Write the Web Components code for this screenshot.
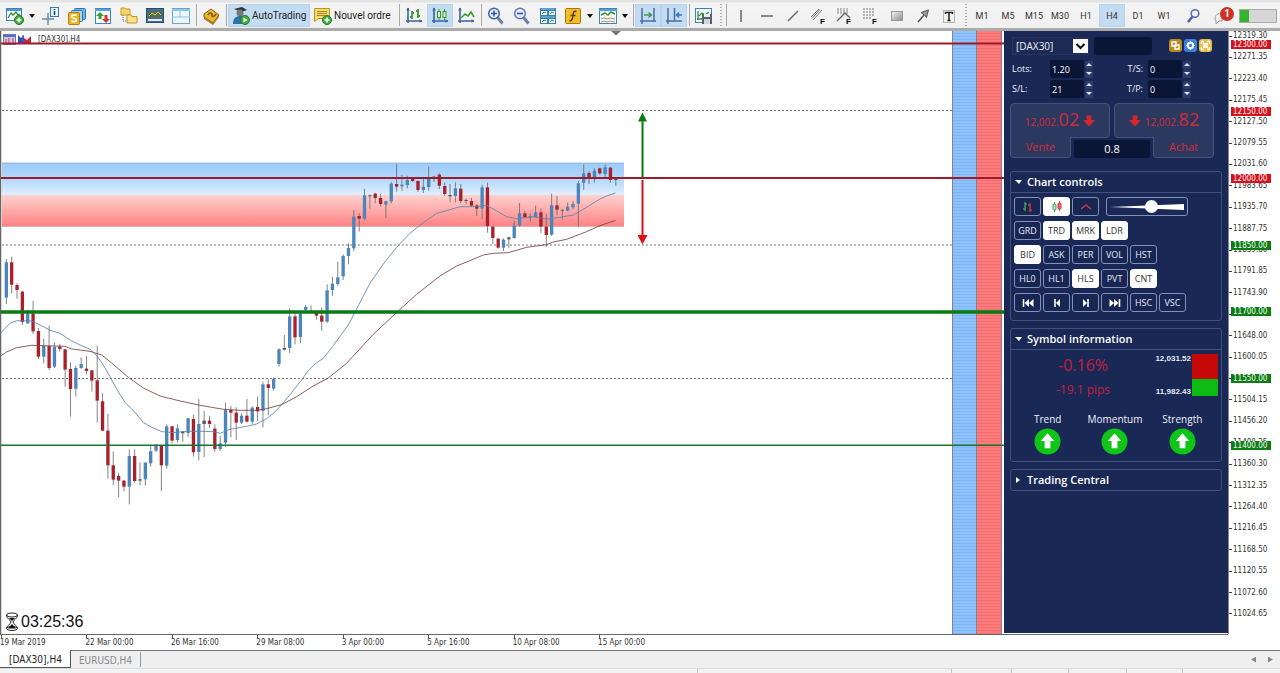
<!DOCTYPE html>
<html lang="fr">
<head>
<meta charset="utf-8">
<title>[DAX30],H4</title>
<style>
html, body { margin: 0; height: 100%; }
body { background: #f1f1f1; font-family: "DejaVu Sans Condensed", "DejaVu Sans", sans-serif; color: #222; }
</style>
</head>
<body>
<trade-app></trade-app>
<script>
const sheet = (el, html) => {
  const t = document.createElement('template');
  t.innerHTML = html;
  el.attachShadow({ mode: 'open' }).append(t.content.cloneNode(true));
  return el.shadowRoot;
};

/* ---------- toolbar icons, all on an 18 x 18 grid ---------- */
const axes = '<path d="M3 1v15M1 14h16" stroke="#3f62a0" stroke-width="1.6" fill="none"/><path d="M1.200 3.500L3 .5l1.800 3zM14.500 12.200l3 1.800-3 1.800z" fill="#3f62a0"/>';
const plus = '<circle cx="13" cy="13" r="4.500" fill="#3fae3a" stroke="#24782a"/><path d="M13 10.500v5M10.500 13h5" stroke="#fff" stroke-width="1.600"/>';
const fib = '<text x="10" y="17" font-family="Liberation Sans" font-weight="700" font-size="8" fill="#000">F</text>';
const ICONS = {
  newchart: '<rect x=".5" y="1.500" width="15" height="12" fill="#f3fbff" stroke="#3c84b8"/><path d="M1 3h14" stroke="#4f9bd0" stroke-width="2"/><path d="M2 11l3-5 2 2 3-3 2 3 2-1" stroke="#3b8a35" stroke-width="1.300" fill="none"/>' + plus,
  cross: '<path d="M6 6v12M0 12h12" stroke="#5f8bb0" stroke-width="1.400"/><rect x="8.500" y=".5" width="8" height="9" fill="#e8f4ff" stroke="#3a77ad"/><path d="M12.500 4v4M12.500 2v1" stroke="#174f86" stroke-width="1.600"/>',
  money: '<rect x="6.500" y="1.500" width="11" height="11" rx="1" fill="#6bb4ea" stroke="#2f76b3"/><rect x="3.500" y="3.500" width="11" height="11" rx="1" fill="#a9d5f5" stroke="#2f76b3"/><rect x=".5" y="5.500" width="11" height="12" rx="1" fill="#ecb520" stroke="#b57d0c"/><path d="M8.500 8.500c-1-1-5-1-5 1s5 1.500 5 3.500-4 2-5 .7" stroke="#fff" stroke-width="1.700" fill="none"/>',
  updown: '<rect x="1.500" y="1.500" width="15" height="15" fill="#f2faff" stroke="#3e86bd"/><path d="M1 3h16" stroke="#57a3d8" stroke-width="2"/><path d="M6 5l4 4H7.500v3h-3V9H2z" fill="#35a030"/><path d="M12 16l-4-4h2.500V8h3v4H16z" fill="#d8322a"/>',
  folders: '<path d="M1 1h4l1 1h4v6H1z" fill="#f7d56e" stroke="#c89a2c"/><path d="M3 8v6h4" stroke="#666" fill="none" stroke-dasharray="1 1"/><path d="M7 8h4l1 1.500h5V16H7z" fill="#fae08a" stroke="#c4922a"/>',
  terminal: '<rect x=".5" y="1.500" width="17" height="14" fill="#3f6f9c" stroke="#264c70"/><rect x="2" y="4" width="14" height="7" fill="#5d6a52"/><path d="M3 9l3-3 3 2 3-3 3 3" stroke="#c9d84a" fill="none"/><path d="M2 13h14" stroke="#dceeff" stroke-width="2"/>',
  layout: '<rect x=".5" y="1.500" width="17" height="15" fill="#eaf7ff" stroke="#6ca6cf"/><path d="M0 3h18" stroke="#8fc5ea" stroke-width="2"/><path d="M8 4v6M0 10h18" stroke="#8fc0df"/>',
  book: '<path d="M2 7l7-5 8 6-6 8-9-6z" fill="#e8b82c" stroke="#8a5d10"/><path d="M2 10l9 6 6-8v2l-6 8-9-6z" fill="#a8762a"/><path d="M6 8c1-3 5-2 4 0s3 2 4-1" stroke="#7d4f10" stroke-width="1.500" fill="none"/>',
  auto: '<path d="M2 2l8-2 5 3-6 2z" fill="#333"/><circle cx="8" cy="6" r="3.500" fill="#707a80"/><path d="M1 17c0-6 3-8 7-8s6 2 6 8z" fill="#2f6fae"/><circle cx="13" cy="13" r="4.500" fill="#3fae3a" stroke="#24782a"/><path d="M11.500 10.500l4 2.500-4 2.500z" fill="#fff"/>',
  order: '<path d="M.5 1.500h15v10h-11l-4 3z" fill="#f8dc66" stroke="#b9922a"/><path d="M3 4.500h10M3 6.500h10M3 8.500h8" stroke="#a8852a"/>' + plus,
  bars: axes + '<path d="M7 4v8M5 10h2M7 6h2M13 2v9M11 4h2M13 9h2" stroke="#3f9a32" stroke-width="1.800"/>',
  candles: axes + '<path d="M8 2v11M13.500 2v11" stroke="#3f9a32"/><rect x="6.500" y="4.500" width="3" height="6" fill="#d9f2d4" stroke="#3f9a32"/><rect x="12" y="4.500" width="3" height="6" fill="#d9f2d4" stroke="#3f9a32"/>',
  line: axes + '<path d="M4 11l4-4 3 2 3-4 3 5" stroke="#3f9a32" stroke-width="1.600" fill="none"/>',
  zoomin: '<path d="M10.500 10.500l5 6" stroke="#6d7fa8" stroke-width="3"/><circle cx="7" cy="6.500" r="5.300" fill="#e4f0ff" stroke="#3f5fae" stroke-width="1.500"/><path d="M4 6.500h6M7 3.500v6" stroke="#3256a8" stroke-width="1.600"/>',
  zoomout: '<path d="M10.500 10.500l5 6" stroke="#6d7fa8" stroke-width="3"/><circle cx="7" cy="6.500" r="5.300" fill="#e4f0ff" stroke="#5c78b8" stroke-width="1.500"/><path d="M4 6.500h6" stroke="#3256a8" stroke-width="1.600"/>',
  tile: '<rect x="1" y="1" width="16" height="16" fill="#2f7fb8"/><path d="M2 4h6v4H2zM10 4h6v4h-6zM2 12h6v4H2zM10 12h6v4h-6z" fill="#fff"/><path d="M2 2h14M2 10h14" stroke="#8cc6ee"/><path d="M3 7l2-2 2 1M11 7l2-2 2 1M3 15l2-2 2 1M11 15l2-2 2 1" stroke="#3b9230" fill="none"/>',
  func: '<rect x="1.500" y="1.500" width="15" height="15" rx="1" fill="#f0bd28" stroke="#a8770c"/><path d="M12.500 4.500c-3-1-3 1-3.500 4s-1 6-3.500 5M6.500 8.500h5" stroke="#5a3a00" stroke-width="1.500" fill="none"/>',
  template: '<rect x=".5" y="1.500" width="17" height="15" fill="#f4fbff" stroke="#3c84b8"/><path d="M0 3h18" stroke="#57a0d2" stroke-width="2"/><path d="M2 8l4-2 3 2 3-3 4 2" stroke="#3b8a35" stroke-width="1.500" fill="none"/><path d="M2 12l3-1 3 1 3-1 5 1M2 15l3-1 3 1 3-1 5 1" stroke="#c08a70" fill="none"/>',
  scroll: '<path d="M3 1v16M15 1v13M1 14h16" stroke="#4a6ba6" stroke-width="1.500"/><path d="M5 8h7M9.500 5.500L12.500 8l-3 2.500" stroke="#3f9a4a" stroke-width="1.500" fill="none"/>',
  shift: '<path d="M3 1v16M9.500 1v13M1 14h16" stroke="#4a6ba6" stroke-width="1.500"/><path d="M17 8h-5M14 5.500L11.500 8l2.500 2.500" stroke="#3b6fc0" stroke-width="1.500" fill="none"/>',
  save: '<rect x=".5" y="1.500" width="16" height="14" fill="#f4fbff" stroke="#3c84b8"/><path d="M3 4v9M2 12h8M4 9l3-3 3 2 4-3" stroke="#3b8a35" stroke-width="1.300" fill="none"/><rect x="7" y="7" width="10" height="10" fill="#55606c"/><rect x="9" y="7" width="6" height="3" fill="#e8eef4"/><rect x="9" y="12" width="6" height="5" fill="#cfd7de"/>',
  vline: '<path d="M9 3v12" stroke="#666" stroke-width="1.500"/>',
  hline: '<path d="M3 9h12" stroke="#666" stroke-width="1.500"/>',
  trend: '<path d="M4 14L14 4" stroke="#666" stroke-width="1.500"/>',
  channel: '<path d="M1 10l8-8M3 13l9-10M2 11.500l8-9" stroke="#777"/>' + fib,
  fan: '<path d="M1 2h11M1 4h11M1 6h11" stroke="#888" stroke-dasharray="2 1"/><path d="M1 14l8-8 5 5" stroke="#666" fill="none" stroke-width="1.400"/>' + fib,
  retr: '<path d="M1 2h12M1 5h12M1 8h12M1 11h8" stroke="#777" stroke-dasharray="2 1"/>' + fib,
  rect: '<defs><linearGradient id="g" x2="1" y2="1"><stop stop-color="#f4f4f4"/><stop offset="1" stop-color="#8c8c8c"/></linearGradient></defs><rect x="3.500" y="4.500" width="11" height="9" fill="url(#g)" stroke="#9a9a9a"/>',
  arrow: '<path d="M4 15l6-7" stroke="#555" stroke-width="1.600"/><path d="M7 5.500L14.500 3l-2 7.500-2-2.500z" fill="#999" stroke="#555"/>',
  text: '<rect x="3.500" y="3.500" width="11" height="12" fill="none" stroke="#777" stroke-dasharray="1 1"/><path d="M5.500 5v2M5.500 5.500h7M12.500 5v2M9 5v8.500M7.500 13.500h3" stroke="#222" stroke-width="1.500"/>',
  search: '<path d="M8 9l-5 6" stroke="#4a5fa0" stroke-width="2.500"/><circle cx="10" cy="6.500" r="3.800" fill="#f0f4ff" stroke="#5a6cb0" stroke-width="1.600"/>'
};
const svg = (body, w = 18, h = w, vb = `0 0 ${w} ${h}`) =>
  `<svg width="${w}" height="${h}" viewBox="${vb}" aria-hidden="true">${body}</svg>`;

customElements.define('tool-button', class extends HTMLElement {
  constructor() {
    super();
    const icon = this.getAttribute('icon'), label = this.getAttribute('label') || '';
    sheet(this, `<style>
      :host { display: block; flex: none; width: 26px; padding: 4px 0 1px; }
      :host([wide]) { width: 82px; } :host([wider]) { width: 87px; }
      :host([menu]) { width: 35px; }
      button { display: flex; align-items: center; width: 100%; height: 100%; gap: 2px; margin: 0; border: 1px solid transparent;
        background: none; color: #333; font: 9px/12px Roboto, sans-serif; padding: 0 3px; justify-content: center; }
      :host([on]) button { background: #c3dcf2; border-color: #b4d3ee; }
      :host([wide]) button, :host([wider]) button { font-size: 10px; color: #222; justify-content: flex-start; }
      svg { flex: none; display: block; }
      .m { width: 0; border: 3px solid transparent; border-top: 4px solid #111; border-bottom: 0; margin-left: 3px; }
    </style><button title="${icon || label}">${icon ? svg(ICONS[icon]) : ''}${label ? `<span>${label}</span>` : ''}${this.hasAttribute('menu') ? '<i class="m"></i>' : ''}</button>`);
  }
});

customElements.define('tool-bar', class extends HTMLElement {
  constructor() {
    super();
    const b = (...names) => names.map(n => `<tool-button icon="${n}"></tool-button>`).join('');
    const sep = '<i class="sep"></i>', grip = '<i class="grip"></i>';
    sheet(this, `<style>
      :host { display: flex; height: 28px; padding-left: 3px; overflow: hidden; box-sizing: content-box;
        background: linear-gradient(#e3e3e3 0 2px, #f4f4f4 3px, #f0f0f0); border-bottom: 3px solid #ababab; }
      .sep { flex: none; width: 1px; margin: 4px 1px 2px 2px; background: #a9a9a9; }
      .grip { flex: none; width: 2px; margin: 4px 2px 2px 3px; background: repeating-linear-gradient(#aaa 0 1px, transparent 1px 3px); }
      .bell { position: relative; flex: none; width: 26px; margin-left: 4px; border: 0; padding: 0; background: none; }
      .bell svg { position: absolute; left: 3px; top: 11px; }
      .bell b { position: absolute; left: 9px; top: 7px; width: 14px; height: 14px; border-radius: 50%; background: #cf3325; color: #fff; font: 700 10px/14px Roboto, sans-serif; text-align: center; }
      .meter { flex: none; width: 38px; height: 14px; margin: 9px 0 0 2px; box-sizing: border-box; border: 1px solid #aaa; background: linear-gradient(90deg, #35b432 0 9px, #d6d6d6 9px); }
    </style>
    <tool-button icon="newchart" menu></tool-button>${b('cross', 'money', 'updown', 'folders', 'terminal', 'layout')}${sep}${b('book')}${sep}
    <tool-button icon="auto" label="AutoTrading" wide on></tool-button><tool-button icon="order" label="Nouvel ordre" wider></tool-button>${sep}
    ${b('bars')}<tool-button icon="candles" on></tool-button>${b('line')}${sep}${b('zoomin', 'zoomout', 'tile')}
    <tool-button icon="func" menu></tool-button><tool-button icon="template" menu></tool-button>${sep}
    <tool-button icon="scroll" on></tool-button><tool-button icon="shift" on></tool-button>${sep}${b('save')}${grip}${sep}
    ${b('vline', 'hline', 'trend', 'channel', 'fan', 'retr', 'rect', 'arrow', 'text')}${grip}
    ${['M1', 'M5', 'M15', 'M30', 'H1', 'H4', 'D1', 'W1'].map(t => `<tool-button label="${t}"${t === 'H4' ? ' on' : ''}></tool-button>`).join('')}
    <i class="sep" style="visibility:hidden"></i>${b('search')}
    <button class="bell" aria-label="Messages">${svg('<path d="M1 8c0-4 3-6 7-6v8H5l-3 3v-3z" fill="#eee" stroke="#999"/>', 14)}<b>1</b></button>
    <div class="meter" role="img" aria-label="connexion"></div>`);
  }
});

/* ---------- chart data ---------- */
/* Vertical unit: a third of a pixel, counted from y = 150. Each bar: high, body top, body bottom, low, kind (b up, r down, g flat). */
const BARS = `327,337,443,462,b 320,337,404,430,r 400,405,420,446,r 423,425,516,525,r 480,490,520,522,b 453,490,544,552,r 534,543,620,628,r
566,588,620,640,b 527,588,654,660,r 577,591,650,654,b 582,590,597,605,r 597,598,659,710,r 637,657,717,800,r 648,654,716,740,b 622,642,654,657,b
618,656,663,672,r 660,661,692,725,r 587,691,752,818,r 730,754,842,843,r 792,842,946,986,r 905,946,989,1006,r 968,978,992,1042,r 990,992,1010,1024,r
898,918,1010,1063,b 898,918,993,998,r 937,988,992,1006,g 937,938,988,1006,b 887,904,940,950,b 882,887,902,906,b 885,887,946,1023,r 823,829,947,956,b
828,829,872,880,r 823,835,870,878,b 843,845,850,875,g 803,805,849,862,b 794,807,907,920,r 747,822,906,931,b 783,812,822,922,g 797,812,822,834,r
823,836,897,905,r 857,880,897,903,b 758,780,878,890,b 767,780,788,862,r 772,788,818,870,r 790,797,818,822,b 747,797,815,818,r 769,773,815,822,b
740,771,784,813,r 695,703,783,832,b 688,703,714,795,r 682,687,716,722,b 595,598,642,650,b 555,594,599,602,g 475,499,594,609,b 488,499,562,583,r
488,490,561,580,b 465,471,480,482,b 467,482,486,488,b 482,489,497,509,r 473,497,515,542,r 403,421,515,519,b 380,401,420,438,b 335,382,402,407,b
313,318,379,390,b 280,294,318,343,b 180,200,295,304,b 190,198,206,245,r 116,136,206,210,b 133,136,139,176,g 128,131,144,160,r 131,144,162,170,r
152,154,164,204,b 96,101,154,160,b 42,102,110,125,r 75,104,109,122,b 77,90,105,115,b 84,86,93,95,r 92,93,120,126,r 85,110,120,129,b 50,83,111,122,b
78,80,84,96,g 70,74,107,117,r 97,108,132,138,r 102,135,139,157,g 97,115,138,157,b 102,116,153,160,r 146,150,153,163,g 144,153,167,170,r
163,166,176,198,r 104,112,176,208,b 98,112,228,248,r 228,230,264,282,r 264,266,293,295,r 265,269,293,303,b 260,262,268,295,g 213,226,264,266,b
159,190,226,230,b 182,190,202,205,r 190,198,203,214,b 167,187,202,203,b 175,187,230,250,r 192,230,255,291,r 131,166,254,258,b 138,166,179,195,r
176,180,182,208,g 158,170,182,184,b 153,162,172,178,b 93,100,161,230,b 43,70,98,120,b 63,69,82,102,r 55,62,82,98,b 53,55,70,74,r 43,52,72,80,b
51,53,90,98,r 83,86,90,107,g`.trim().split(/\s+/).map(s => s.split(','));
const FAST = '0,552 10,540 30,520 50,512 95,513 130,530 150,541 180,550 210,570 240,585 270,598 290,617 310,645 330,680 350,717 375,757 400,782 430,817 455,832 485,845 520,848 560,844 600,844 640,845 660,850 690,838 740,829 770,822 800,806 825,786 845,764 870,734 905,690 925,662 945,642 970,625 1000,587 1045,525 1075,467 1110,400 1150,342 1190,292 1230,250 1270,218 1310,190 1340,182 1380,170 1430,170 1460,166 1490,183 1520,200 1550,206 1600,200 1640,207 1680,202 1720,195 1760,172 1800,147 1820,138 1847,129';
const SLOW = '0,619 20,606 50,593 95,586 195,589 215,597 270,604 305,615 340,643 385,682 430,714 480,738 540,753 600,766 670,778 720,781 770,781 800,776 845,764 890,740 940,708 985,684 1040,640 1120,553 1195,483 1250,433 1320,378 1370,348 1410,332 1450,315 1480,310 1525,308 1580,292 1640,284 1660,276 1700,268 1760,245 1800,227 1847,211';
const INK = { b: '#4a86bd', r: '#a8202c', g: '#555' };

customElements.define('price-plot', class extends HTMLElement {
  constructor() {
    super();
    const bars = BARS.map(([h, t, b, l, c], i) => {
      const x = 19 + i * 16.04;
      return `<path d="M${x} ${h}V${l}" stroke="#6b6b6b" stroke-width="2.500"/><rect x="${x - 5}" y="${t}" width="10" height="${b - t}" fill="${INK[c]}"/>`;
    }).join('');
    const dash = [110.5, 245, 378.5].map(y => `<path d="M2 ${y}H952" stroke="#777" stroke-dasharray="2 2"/>`).join('');
    sheet(this, `<style>
      :host { display: block; position: relative; min-height: 0; overflow: hidden; background: #fff; }
      .draw { position: absolute; inset: 0; width: 100%; height: 100%; }
      .cap { position: absolute; left: 3px; top: 3px; display: flex; align-items: center; gap: 1px; font-size: 8px; line-height: 11px; color: #333; }
      .cap span { margin-left: 5px; }
      .clock { position: absolute; left: 5px; bottom: 2px; display: flex; align-items: center; gap: 2px; font: 16px/20px "Liberation Sans", sans-serif; color: #111; }
    </style>
    <div class="cap">${svg('<rect x=".5" y=".5" width="12" height="10" fill="#c9cbe8" stroke="#777aa8"/><path d="M0 2h13" stroke="#5a6ac8" stroke-width="2"/><path d="M3 5v4M6 4v5M10 4v5" stroke="#d86070" stroke-width="1.500"/>', 14, 11)}${svg('<path d="M0 1l3 3 3-3v9H0z" fill="#3b49b8"/><path d="M6 4l3 2 4-4v8H6z" fill="#c8283c"/><path d="M5 1v9" stroke="#6a5ac0"/>', 14, 11)}<span>[DAX30],H4</span></div>
    <svg class="draw" viewBox="0 31 1004 603" preserveAspectRatio="none" aria-hidden="true">
      <defs>
        <linearGradient id="up" x2="0" y2="1"><stop stop-color="#9ccbfb"/><stop offset=".5" stop-color="#b2d8fd"/><stop offset="1" stop-color="#e2effc"/></linearGradient>
        <linearGradient id="dn" x2="0" y2="1"><stop stop-color="#ffd2cf"/><stop offset="1" stop-color="#ff8284"/></linearGradient>
        <pattern id="pb" width="24" height="3" patternUnits="userSpaceOnUse"><rect width="24" height="3" fill="#8cc3ff"/><rect width="24" height="1" fill="#7fb6f2"/></pattern>
        <pattern id="pr" width="24" height="3" patternUnits="userSpaceOnUse"><rect width="24" height="3" fill="#ff7b7b"/><rect width="24" height="1" fill="#f07072"/></pattern>
      </defs>
      <rect x="2" y="163" width="622" height="32" fill="url(#up)"/><rect x="2" y="195" width="622" height="31" fill="url(#dn)"/>
      <path d="M2 163H624" stroke="#84a8d0" stroke-width=".7"/><path d="M2 226.500H624" stroke="#c89090" stroke-width=".7"/>
      <rect x="952" y="31" width="25" height="603" fill="url(#pb)"/><rect x="977" y="31" width="24" height="603" fill="url(#pr)"/>
      <path d="M952.500 31V634M976.500 31V634M1001.500 31V634" stroke="#8a7f92"/>
      ${dash}
      <g transform="translate(0 150) scale(.3333)">${bars}
        <polyline points="${FAST}" fill="none" stroke="#5f86a8" stroke-width="2.600"/><polyline points="${SLOW}" fill="none" stroke="#7a4444" stroke-width="2.600"/></g>
      <path d="M0 43.500H1004M0 178H1004" stroke="#9c1c2c" stroke-width="1.800"/>
      <path d="M0 312H1004" stroke="#0a7a12" stroke-width="3.600"/><path d="M0 445.200H1004" stroke="#1c7430" stroke-width="1.600"/>
      <path d="M642.500 177V118" stroke="#0a7a12" stroke-width="2"/><path d="M638 121.500l4.500-9 4.500 9z" fill="#0a7a12"/>
      <path d="M642.500 180V238" stroke="#d01018" stroke-width="2"/><path d="M637.500 235l5 9.500 5-9.500z" fill="#e01018"/>
      <path d="M611 31h10l-5 4.500z" fill="#777"/>
      <path d="M.5 31V634" stroke="#666" stroke-width="1.500"/>
    </svg>
    <div class="clock">${svg('<ellipse cx="7" cy="3" rx="5.500" ry="2" fill="#fff" stroke="#222"/><path d="M1.500 3c0 4 4.500 5 4.500 7s-4.500 4-4.500 6M12.500 3c0 4-4.500 5-4.500 7s4.500 4 4.500 6" fill="none" stroke="#222"/><ellipse cx="7" cy="16.500" rx="5.500" ry="2" fill="#fff" stroke="#222"/><path d="M7 12l4 4.500H3zM4 6h6l-3 3z" fill="#111"/>', 14, 20)}<time>03:25:36</time></div>`);
  }
});

customElements.define('price-axis', class extends HTMLElement {
  constructor() {
    super();
    const rows = Array.from({ length: 28 }, (_, i) => (12319.3 - i * 47.95).toFixed(2));
    const at = p => (((12319.3 - p) / 1294.65 * 578 + 5) / 603 * 100).toFixed(2);
    const tags = [12300, 12150, 12000, 11850, 11700, 11550, 11400];
    sheet(this, `<style>
      :host { display: block; position: relative; background: #fff; font-size: 8px; line-height: 10px; color: #333; border-left: 1px solid #888; box-sizing: border-box; min-height: 0; }
      ul { list-style: none; margin: 0; padding: 0 0 15px; box-sizing: border-box; height: 100%; display: flex; flex-direction: column; justify-content: space-between; }
      li { display: flex; align-items: center; gap: 1px; height: 10px; }
      li::before { content: ""; width: 3px; height: 1px; background: #444; }
      b { position: absolute; left: 2px; width: 40px; box-sizing: border-box; padding-left: 2px; height: 9px; line-height: 9px; margin-top: -5px; color: #fff; font-weight: 400; background: #0c7c14; }
      b.r { background: #d8101c; }
    </style><ul>${rows.map(r => `<li>${r}</li>`).join('')}</ul>
    ${tags.map(p => `<b class="${p >= 12000 && p !== 11850 ? 'r' : 'g'}" style="top:${at(p)}%">${p.toFixed(2)}</b>`).join('')}`);
  }
});

customElements.define('time-axis', class extends HTMLElement {
  constructor() {
    super();
    sheet(this, `<style>
      :host { display: block; background: #fff; height: 16px; }
      .line { border-top: 1px solid #666; width: calc(100% - 52px); }
      ol { list-style: none; margin: 0; padding: 0; width: 53.4%; display: grid; grid-template-columns: repeat(8, 1fr); font-size: 8px; line-height: 9px; color: #333; }
      li { white-space: nowrap; }
      li::before { content: ""; display: block; width: 1px; height: 3px; background: #555; margin-left: 1px; }
    </style><div class="line"></div><ol>${['19 Mar 2019', '22 Mar 00:00', '26 Mar 16:00', '29 Mar 08:00', '3 Apr 00:00', '5 Apr 16:00', '10 Apr 08:00', '15 Apr 00:00'].map(t => `<li>${t}</li>`).join('')}</ol>`);
  }
});

/* ---------- side panel ---------- */
customElements.define('panel-section', class extends HTMLElement {
  constructor() {
    super();
    sheet(this, `<style>
      :host { display: block; }
      details { border: 1px solid #3f4f7e; border-radius: 3px; }
      summary { display: flex; align-items: center; gap: 6px; height: 20px; padding-left: 4px; list-style: none; color: #fff; font: 600 11px/20px "Open Sans", "Noto Sans", sans-serif; }
      summary::before { content: ""; width: 6px; height: 6px; background: #fff; clip-path: polygon(1px 0, 5px 3px, 1px 6px); }
      details[open] summary { border-bottom: 1px solid #3f4f7e; }
      details[open] summary::before { width: 7px; margin-right: -1px; clip-path: polygon(0 1px, 7px 1px, 4px 5px); }
    </style><details${this.hasAttribute('open') ? ' open' : ''}><summary>${this.getAttribute('heading')}</summary><slot></slot></details>`);
  }
});

customElements.define('num-field', class extends HTMLElement {
  constructor() {
    super();
    sheet(this, `<style>
      :host { display: grid; grid-template-columns: 1fr 34px 9px; align-items: center; height: 20px; column-gap: 1px; font: 9px/12px "Open Sans", sans-serif; color: #eef1f8; }
      :host([end]) label { text-align: right; padding-right: 4px; }
      input { width: 34px; height: 18px; box-sizing: border-box; border: 0; border-radius: 2px; padding: 0 2px; background: #0b1636; color: #fff; font: inherit; }
      .spin { display: grid; gap: 1px; }
      .spin button { display: grid; place-items: center; width: 8px; height: 8px; padding: 0; border: 0; border-radius: 1px; background: #2b3b6a; }
      i { border: 3px solid transparent; border-top: 0; border-bottom: 3px solid #dbe3f5; }
      .dn i { border-bottom: 0; border-top: 3px solid #dbe3f5; }
    </style><label for="v">${this.getAttribute('label')}</label><input id="v" value="${this.getAttribute('value')}">
    <div class="spin"><button aria-label="+"><i></i></button><button class="dn" aria-label="-"><i></i></button></div>`);
  }
});

customElements.define('trade-ticket', class extends HTMLElement {
  constructor() {
    super();
    const down = svg('<path d="M4 0h5v5h4l-6.500 7L0 5h4z" fill="#d8262e"/>', 12, 12, '0 0 13 12');
    const badge = (c, name, inner) => `<button class="badge" aria-label="${name}" style="background:${c}">${svg(inner, 13)}</button>`;
    sheet(this, `<style>
      :host { display: block; font-family: "Open Sans", "Noto Sans", sans-serif; }
      .head { display: flex; align-items: center; height: 19px; padding: 5px 10px 0 2px; }
      .pick { position: relative; width: 77px; margin-right: 5px; }
      select { display: block; appearance: none; width: 100%; height: 18px; padding: 0 0 0 3px; border: 1px solid #26345f; background: #1c2a56; color: #eef1f8; font: 10px/16px "Open Sans", sans-serif; }
      .pick svg { position: absolute; right: 1px; top: 2px; background: #fff; pointer-events: none; }
      .head input { width: 58px; height: 18px; box-sizing: border-box; border: 0; border-radius: 2px; background: #0b1636; margin-right: auto; }
      .badge { width: 13px; height: 13px; padding: 0; border: 0; border-radius: 3px; margin-left: 2px; }
      .badge svg { display: block; }
      .fields { display: grid; grid-template-columns: 82px 98px; padding: 4px 0 0 2px; }
      .deal { display: grid; grid-template: 34px 21px / 1fr 1fr; column-gap: 4px; margin: 4px 8px 0 0; }
      .side { display: flex; flex-direction: column; padding: 0; border: 0; background: none; color: #d22a38; font-family: inherit; }
      .side.buy { grid-area: 1 / 2 / 3 / 3; align-items: flex-end; }
      .side.sell { grid-area: 1 / 1 / 3 / 2; align-items: flex-start; }
      .quote, .name { box-sizing: border-box; background: #2b3960; border: 1px solid #43517b; }
      .quote { display: flex; align-items: center; justify-content: center; gap: 4px; width: 100%; height: 35px; border-radius: 4px; font-size: 10px; line-height: 24px; }
      .quote big { font-size: 18px; }
      .name { width: 61px; height: 21px; margin-top: -1px; border-top: 0; border-radius: 0 0 4px 4px; font-size: 11px; line-height: 19px; }
      .sell .quote { border-bottom-left-radius: 0; } .buy .quote { border-bottom-right-radius: 0; }
      .spread { grid-area: 2 / 1 / 3 / 3; justify-self: center; align-self: end; width: 76px; height: 18px; box-sizing: border-box; border: 0; border-radius: 2px; padding: 0; background: #0b1636; color: #fff; text-align: center; font: 11px/18px "Open Sans", sans-serif; }
    </style>
    <div class="head"><div class="pick"><select aria-label="Symbole"><option>[DAX30]</option></select>${svg('<path d="M3.500 5l4 4 4-4" fill="none" stroke="#111" stroke-width="2"/>', 15, 14)}</div><input aria-label="Commentaire">
      ${badge('#b98a24', 'Lier', '<path d="M3 3h4v4H3zM6 6h4v4H6z" fill="none" stroke="#fff" stroke-width="1.400"/>')}
      ${badge('#3b80dc', 'Options', '<circle cx="6.500" cy="6.500" r="2.700" fill="none" stroke="#fff" stroke-width="2"/><path d="M6.500 2v9M2 6.500h9" stroke="#fff" stroke-width="1.200" stroke-dasharray="1.500 6"/>')}
      ${badge('#e9bc48', 'Agrandir', '<path d="M2.500 5V2.500H5M8 2.500h2.500V5M10.500 8v2.500H8M5 10.500H2.500V8" fill="none" stroke="#fff" stroke-width="1.300"/><rect x="4" y="4" width="5" height="5" fill="#fff6dc"/>')}
    </div>
    <div class="fields"><num-field label="Lots:" value="1.20"></num-field><num-field end label="T/S:" value="0"></num-field><num-field label="S/L:" value="21"></num-field><num-field end label="T/P:" value="0"></num-field></div>
    <div class="deal">
      <button class="side sell"><span class="quote"><span>12,002.<big>02</big></span>${down}</span><span class="name">Vente</span></button>
      <button class="side buy"><span class="quote">${down}<span>12,002.<big>82</big></span></span><span class="name">Achat</span></button>
      <input class="spread" aria-label="Spread" value="0.8">
    </div>`);
  }
});

customElements.define('chart-controls', class extends HTMLElement {
  constructor() {
    super();
    const key = (t, on) => `<button aria-pressed="${!!on}">${t}</button>`;
    const row = s => s.split(' ').map(t => key(t.replace('*', ''), t.endsWith('*'))).join('');
    const s = d => svg(d, 14, 12);
    sheet(this, `<style>
      :host { display: grid; gap: 5px; padding: 4px 3px 8px; }
      div { display: flex; gap: 2px; height: 19px; }
      button { display: grid; place-items: center; box-sizing: border-box; width: 27px; height: 19px; padding: 0; border: 1px solid #8391b8; border-radius: 3px; background: #182653; color: #e6eaf5; font: 9px/16px "Open Sans", sans-serif; }
      button[aria-pressed=true] { background: #fff; border-color: #fff; color: #333; }
      label { position: relative; box-sizing: border-box; width: 82px; height: 19px; margin-left: 5px; border: 1px solid #8391b8; border-radius: 3px; padding: 0 3px; display: flex; align-items: center; }
      label::before { content: ""; position: absolute; inset: 6px 3px 5px; background: #fff; clip-path: polygon(0 50%, 100% 0, 100% 100%); }
      input { position: relative; appearance: none; width: 100%; height: 13px; margin: 0; background: none; }
      input::-webkit-slider-thumb { appearance: none; width: 13px; height: 13px; border-radius: 50%; background: #fff; }
    </style>
    <div>${key(s('<path d="M4 1v9M2 8h2M4 3h2" stroke="#3e9a58" stroke-width="1.500"/><path d="M9 2v9M7 4h2M9 9h2" stroke="#d03040" stroke-width="1.500"/>'))}${key(s('<path d="M4.500 1v10M9.500 0v10" stroke="#777"/><rect x="3" y="3" width="3" height="6" rx="1" fill="#bfe3c6" stroke="#3e9a58"/><rect x="8" y="2" width="3" height="6" rx="1" fill="#f06a70" stroke="#d03040"/>'), 1)}${key(s('<path d="M2 8l5-4 5 4" fill="none" stroke="#c8394c" stroke-width="1.500"/>'))}<label><input type="range" min="0" max="100" value="58" aria-label="Zoom"></label></div>
    <div>${row('GRD TRD* MRK* LDR*')}</div>
    <div>${row('BID* ASK PER VOL HST')}</div>
    <div>${row('HL0 HL1 HLS* PVT CNT*')}</div>
    <div>${key(s('<path d="M2.500 2v8" stroke="#fff" stroke-width="1.600"/><path d="M8 2v8L3.500 6zM12.500 2v8L8 6z" fill="#fff"/>'))}${key(s('<path d="M5 2v8" stroke="#fff" stroke-width="1.600"/><path d="M10 2v8L6 6z" fill="#fff"/>'))}${key(s('<path d="M9 2v8" stroke="#fff" stroke-width="1.600"/><path d="M4 2v8L8 6z" fill="#fff"/>'))}${key(s('<path d="M11.500 2v8" stroke="#fff" stroke-width="1.600"/><path d="M6 2v8L10.500 6zM1.500 2v8L6 6z" fill="#fff"/>'))}${row('HSC VSC')}</div>`);
  }
});

customElements.define('symbol-info', class extends HTMLElement {
  constructor() {
    super();
    const up = svg('<circle cx="14" cy="14" r="13.500" fill="#10c418"/><path d="M14 5.500l7 8h-4V21h-6v-7.500H7z" fill="#fff"/>', 27, 27, '0 0 28 28');
    sheet(this, `<style>
      :host { display: block; padding: 4px 5px 6px 3px; font-family: "Open Sans", "Noto Sans", sans-serif; }
      .top { display: grid; grid-template-columns: 138px 1fr 26px; column-gap: 1px; margin-right: -2px; }
      .chg { text-align: center; color: #c0203e; font-size: 12px; line-height: 26px; }
      .chg strong { display: block; font-weight: 400; font-size: 16px; line-height: 23px; }
      .lim { display: flex; flex-direction: column; justify-content: space-between; height: 42px; font: 700 8px/9px "Liberation Sans", sans-serif; color: #e4e8f2; text-align: right; }
      .bar { height: 42px; background: linear-gradient(#c40808 0 60%, #0cbc14 60%); }
      .sig { display: grid; grid-template-columns: repeat(3, 1fr); text-align: center; font-size: 10px; line-height: 14px; color: #eef1f8; margin-top: 9px; }
      .sig svg { display: block; margin: 2px auto 0; }
    </style>
    <div class="top"><div class="chg"><strong>-0.16%</strong>-19.1 pips</div><div class="lim"><span>12,031.52</span><span>11,982.43</span></div><div class="bar"></div></div>
    <div class="sig"><div>Trend${up}</div><div>Momentum${up}</div><div>Strength${up}</div></div>`);
  }
});

customElements.define('side-panel', class extends HTMLElement {
  constructor() {
    super();
    sheet(this, `<style>
      :host { display: flex; flex-direction: column; gap: 7px; box-sizing: border-box; padding: 0 6px; background: #1a2855; margin-bottom: 1px; min-height: 0; overflow: hidden; }
      trade-ticket { margin-bottom: 6px; }
    </style><trade-ticket></trade-ticket>
    <panel-section heading="Chart controls" open><chart-controls></chart-controls></panel-section>
    <panel-section heading="Symbol information" open><symbol-info></symbol-info></panel-section>
    <panel-section heading="Trading Central"></panel-section>`);
  }
});

customElements.define('chart-tabs', class extends HTMLElement {
  constructor() {
    super();
    sheet(this, `<style>
      :host { display: block; background: #efeff0; }
      nav { display: flex; height: 17px; border-top: 1px solid #777; border-bottom: 1px solid #ddd; font-size: 10px; line-height: 17px; }
      a { color: #888; text-decoration: none; padding: 0 8px; border-right: 1px solid #999; height: 15px; margin-top: 1px; }
      a.on { color: #222; background: #fff; margin-top: -1px; height: 17px; line-height: 19px; padding-left: 9px; border-bottom: 1px solid #555; border-right: 1px solid #555; }
      .nav { margin-left: auto; display: flex; gap: 12px; padding-right: 7px; align-items: center; }
      .nav button { border: 0; background: #888; width: 5px; height: 6px; padding: 0; clip-path: polygon(100% 0, 100% 100%, 0 50%); }
      .nav button + button { clip-path: polygon(0 0, 100% 50%, 0 100%); }
      .status { display: grid; grid-template-columns: 698fr 254fr 60fr 57fr 58fr 56fr 97fr; height: 4px; background: #f2f2f2; }
      .status i { border-right: 1px solid #c4c4c4; }
      .status i:last-child { border: 0; }
    </style><nav><a class="on" href="#dax">[DAX30],H4</a><a href="#eur">EURUSD,H4</a><div class="nav"><button aria-label="Précédent"></button><button aria-label="Suivant"></button></div></nav>
    <div class="status"><i></i><i></i><i></i><i></i><i></i><i></i><i></i></div>`);
  }
});

customElements.define('trade-app', class extends HTMLElement {
  constructor() {
    super();
    sheet(this, `<style>
      :host { display: flex; flex-direction: column; height: 100vh; min-height: 560px; }
      main { flex: 1; min-height: 0; display: grid; grid-template: minmax(0, 1fr) / minmax(0, 1fr) 224px 52px; background: #fff; }
    </style><tool-bar></tool-bar><main><price-plot></price-plot><side-panel></side-panel><price-axis></price-axis></main><time-axis></time-axis><chart-tabs></chart-tabs>`);
  }
});
</script>
</body>
</html>
